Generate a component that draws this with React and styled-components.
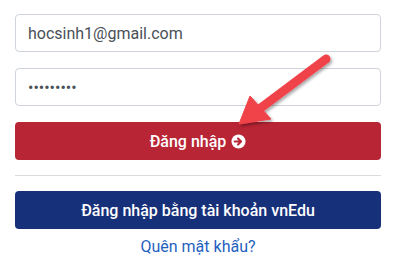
import React from 'react';
import styled, { createGlobalStyle } from 'styled-components';

const GlobalStyle = createGlobalStyle`
  body {
    margin: 0;
    background: #fff;
    font-family: Roboto, "Noto Sans", sans-serif;
  }
`;

const Page = styled.div`
  position: relative;
  width: 396px;
  height: 277px;
  box-sizing: border-box;
  padding: 14px 15px 0;
  display: flex;
  flex-direction: column;
`;

const Input = styled.input`
  box-sizing: border-box;
  width: 100%;
  height: 38px;
  padding: 0 12px;
  margin-bottom: 16px;
  border: 1px solid #ced4da;
  border-radius: 4px;
  font-family: Roboto, sans-serif;
  font-size: 16px;
  color: #495057;
  background: #fff;
  outline: none;
`;

const Button = styled.button`
  box-sizing: border-box;
  width: 100%;
  height: 38px;
  border: none;
  border-radius: 4px;
  background: ${(p) => p.bg};
  color: #fff;
  font-family: Roboto, sans-serif;
  font-size: 16px;
  font-weight: 500;
  display: flex;
  align-items: center;
  justify-content: center;
  gap: 5px;
  cursor: pointer;
`;

const Divider = styled.hr`
  width: 100%;
  margin: 15px 0 15px;
  border: 0;
  border-top: 1px solid #dcdcdc;
`;

const ForgotLink = styled.a`
  margin-top: 8px;
  text-align: center;
  color: #1f5fbf;
  font-size: 16px;
  text-decoration: none;
`;

const ArrowOverlay = styled.svg`
  position: absolute;
  left: 0;
  top: 0;
  pointer-events: none;
`;

const CircleArrow = () => (
  <svg width="15" height="15" viewBox="0 0 16 16">
    <circle cx="8" cy="8" r="7.5" fill="#fff" />
    <path d="M4 8h6.5M7.5 4.8L10.7 8 7.5 11.2" stroke="#b82535" strokeWidth="2.2" fill="none" strokeLinecap="round" strokeLinejoin="round" />
  </svg>
);

const App = () => (
  <>
    <GlobalStyle />
    <Page>
      <Input type="text" defaultValue="hocsinh1@gmail.com" />
      <Input type="password" defaultValue="123456789" />
      <Button bg="#b82535">
        Đăng nhập <CircleArrow />
      </Button>
      <Divider />
      <Button bg="#17307a">Đăng nhập bằng tài khoản vnEdu</Button>
      <ForgotLink href="#">Quên mật khẩu?</ForgotLink>
      <ArrowOverlay width="396" height="277">
        <defs>
          <filter id="sh" x="-20%" y="-20%" width="140%" height="140%">
            <feDropShadow dx="1.5" dy="2" stdDeviation="1.5" floodColor="#000" floodOpacity="0.35" />
          </filter>
        </defs>
        <g filter="url(#sh)" fill="#f0424a" stroke="#f0424a">
          <line x1="326" y1="59" x2="258" y2="110" strokeWidth="9" strokeLinecap="round" />
          <polygon points="239,124 250,96 271,119" strokeWidth="1" strokeLinejoin="round" />
        </g>
      </ArrowOverlay>
    </Page>
  </>
);

export default App;
